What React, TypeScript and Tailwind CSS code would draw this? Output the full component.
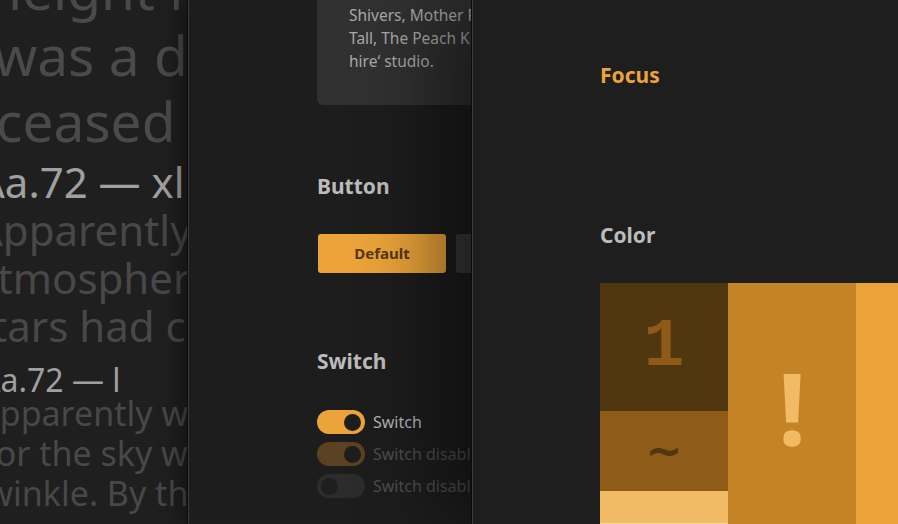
import { FC } from "react";

const sans = "font-['Noto_Sans','Open_Sans',sans-serif]";
const mono = "font-['Liberation_Mono','DejaVu_Sans_Mono',monospace]";

const Toggle: FC<{ on: boolean; disabled?: boolean; label: string }> = ({ on, disabled, label }) => {
  const track = on
    ? disabled
      ? "bg-[#5a4222]"
      : "bg-[#eca43a]"
    : "bg-[#2c2c2c]";
  return (
    <div className="flex items-center gap-2 h-6">
      <div className={`w-12 h-6 shrink-0 rounded-full flex items-center px-[4px] ${on ? "justify-end" : "justify-start"} ${track}`}>
        <div className={`w-[17px] h-[17px] shrink-0 rounded-full ${disabled && !on ? "bg-[#1f1f1f]" : "bg-[#1e1e1e]"}`} />
      </div>
      <span className={`text-[16px] whitespace-nowrap ${disabled ? "text-[#4f4f4f]" : "text-[#b3b3b3]"}`}>{label}</span>
    </div>
  );
};

const App: FC = () => {
  return (
    <div className={`${sans} w-[898px] h-[524px] flex overflow-hidden bg-[#1e1e1e]`}>
      {/* Left: type scale */}
      <div className="w-[188px] shrink-0 overflow-hidden bg-[#1f1f1f]">
        <div className="whitespace-nowrap">
          <div className="-mt-[44px] -ml-[12px] text-[55px] leading-[66px] text-[#4a4a4a]">
            <div>height in</div>
            <div className="ml-[6px]">was a dead</div>
            <div className="ml-[8px]">ceased to</div>
          </div>
          <div className="mt-[3px] -ml-[22px] text-[42px] leading-[50px] text-[#a0a0a0]">Aa.72 — xl</div>
          <div className="-mt-[1px] -ml-[24px] text-[42px] leading-[48px] text-[#484848]">
            <div>Apparently we</div>
            <div className="-ml-[2px]">atmosphere</div>
            <div className="-ml-[4px]">stars had ceased</div>
          </div>
          <div className="mt-[11px] -ml-[20px] text-[32px] leading-[38px] text-[#a0a0a0]">Aa.72 — l</div>
          <div className="-mt-[6px] -ml-[22px] text-[34px] leading-[40px] text-[#484848]">
            <div>Apparently we</div>
            <div className="ml-[6px]">for the sky was</div>
            <div className="-ml-[4px]">twinkle. By the</div>
          </div>
        </div>
      </div>

      {/* Middle: components */}
      <div className="relative z-10 w-[284px] shrink-0 overflow-hidden border-l border-[#3c3c3c] bg-[#1d1d1d] shadow-[-1px_0_0_#0a0a0a,-10px_0_18px_rgba(0,0,0,0.35)]">
        <div className="pl-[128px] w-[420px]">
          <div className="-mt-[20px] w-[220px] rounded-md bg-[#313131] pt-[24px] pb-[32px] pl-[32px] text-[15.5px] leading-[23px] text-[#a9a9a9] whitespace-nowrap">
            <div>Shivers, Mother Falcon, Tall</div>
            <div>Tall, The Peach Kings and</div>
            <div>hire‘ studio.</div>
          </div>

          <h2 className="mt-[67px] text-[21px] leading-[28px] font-bold text-[#bcbcbc]">Button</h2>
          <div className="mt-[34px] flex gap-[10px]">
            <button className="ml-[1px] w-[128px] h-[39px] shrink-0 rounded-[3px] bg-[#eca43a] text-[15px] font-bold text-[#573810]">
              Default
            </button>
            <button className="w-[128px] h-[39px] shrink-0 rounded-[3px] bg-[#3a3a3a] text-[15px] font-semibold text-[#bcbcbc]">
              Secondary
            </button>
          </div>

          <h2 className="mt-[74px] text-[21px] leading-[28px] font-bold text-[#bcbcbc]">Switch</h2>
          <div className="mt-[35px] flex flex-col gap-2">
            <Toggle on label="Switch" />
            <Toggle on disabled label="Switch disabled" />
            <Toggle on={false} disabled label="Switch disabled" />
          </div>
        </div>
      </div>

      {/* Right: tokens */}
      <div className="relative z-20 flex-1 overflow-hidden border-l border-[#3c3c3c] bg-[#1e1e1e] shadow-[-1px_0_0_#0a0a0a,-40px_0_70px_rgba(0,0,0,0.45)]">
        <div className="pl-[127px]">
          <h2 className="mt-[61px] text-[21px] leading-[28px] font-bold text-[#eca43a]">Focus</h2>
          <h2 className="mt-[132px] text-[21px] leading-[28px] font-bold text-[#bcbcbc]">Color</h2>
          <div className="mt-[34px] flex">
            <div className="w-[128px] shrink-0 flex flex-col">
              <div className={`${mono} h-[128px] bg-[#51370f] flex items-center justify-center font-bold text-[68px] text-[#8d5b17]`}>
                1
              </div>
              <div className="h-[80px] bg-[#8e5c18] flex items-center justify-center font-['DejaVu_Sans',sans-serif] font-bold text-[44px] text-[#51370f]">
                ~
              </div>
              <div className="h-[32px] bg-[#f1ba64]" />
              <div className="h-[32px] bg-[#f8d79e]" />
            </div>
            <div className="w-[128px] h-[260px] shrink-0 bg-[#c48325] flex items-center justify-center">
              <span className="-mt-[12px] text-[100px] font-bold text-[#f1ba64]">!</span>
            </div>
            <div className="w-[128px] h-[260px] shrink-0 bg-[#eca43a]" />
          </div>
        </div>
      </div>
    </div>
  );
};

export default App;
